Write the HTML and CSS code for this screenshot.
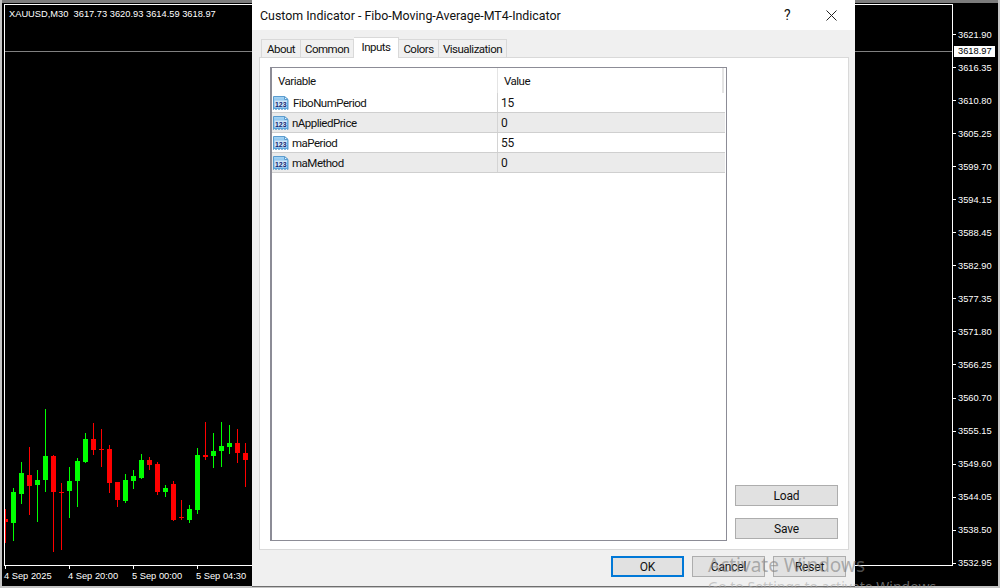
FILE: index.html
```html
<!DOCTYPE html>
<html lang="en">
<head>
<meta charset="utf-8">
<title>Custom Indicator</title>
<link rel="stylesheet" href="styles.css">
</head>
<body>
<svg class="defs" width="0" height="0" aria-hidden="true">
  <defs>
    <linearGradient id="sheet" x1="0" y1="0" x2="0" y2="1">
      <stop offset="0" stop-color="#a9d6f5"/>
      <stop offset="1" stop-color="#4f9fe0"/>
    </linearGradient>
    <symbol id="num" viewBox="0 0 16 16">
      <path d="M.5 1.500h11l3.500 3v10l-1.500-1-1.500 1-1.500-1-1.500 1-1.500-1-1.500 1-1.500-1-1.500 1-1.500-1-1 1z" fill="url(#sheet)" stroke="#5b9ccf"/>
      <path d="M11.500 1.500v3h3.500z" fill="#e8f4fc" stroke="#5b9ccf"/>
      <rect x="1.500" y="5.500" width="12.500" height="7" fill="#cfe6f8"/>
      <text x="7.800" y="11.500" class="num-text">123</text>
    </symbol>
  </defs>
</svg>

<section class="chart">
  <div class="plot">
    <div class="symbol-line">XAUUSD,M30&nbsp; 3617.73 3620.93 3614.59 3618.97</div>
    <svg class="candles" viewBox="5 5 947 560" width="947" height="560" aria-hidden="true">
      <rect x="5" y="51" width="947" height="1" fill="#808080"/>
      <path fill="#ff0000" d="M5 509h1V543h-1zM3 519h5V522h-5zM29 447h1V515h-1zM27 475h5V486h-5zM53 455h1V552h-1zM51 456h5V492h-5zM61 483h1V550h-1zM59 492h5V493h-5zM93 423h1V455h-1zM91 439h5V450h-5zM101 429h1V467h-1zM99 449h5V450h-5zM109 445h1V493h-1zM107 449h5V483h-5zM117 482h1V507h-1zM115 482h5V500h-5zM149 457h1V470h-1zM147 460h5V465h-5zM157 462h1V495h-1zM155 464h5V492h-5zM173 481h1V521h-1zM171 484h5V520h-5zM181 500h1V520h-1zM179 517h5V518h-5zM205 422h1V460h-1zM203 455h5V457h-5zM237 429h1V463h-1zM235 443h5V453h-5zM245 443h1V487h-1zM243 453h5V460h-5z"/>
      <path fill="#00ff00" d="M13 488h1V541h-1zM11 492h5V523h-5zM21 462h1V504h-1zM19 473h5V494h-5zM37 470h1V522h-1zM35 480h5V485h-5zM45 409h1V492h-1zM43 456h5V480h-5zM69 467h1V518h-1zM67 481h5V491h-5zM77 458h1V507h-1zM75 461h5V481h-5zM85 433h1V463h-1zM83 439h5V462h-5zM125 474h1V503h-1zM123 480h5V501h-5zM133 470h1V489h-1zM131 476h5V481h-5zM141 454h1V479h-1zM139 460h5V478h-5zM165 485h1V497h-1zM163 488h5V492h-5zM189 505h1V523h-1zM187 509h5V520h-5zM197 448h1V514h-1zM195 455h5V510h-5zM213 433h1V468h-1zM211 451h5V456h-5zM221 422h1V467h-1zM219 446h5V451h-5zM229 425h1V454h-1zM227 443h5V447h-5z"/>
    </svg>
  </div>
  <div class="price-axis">
    <span class="current-price">3618.97</span>
    <div class="price">3621.90</div>
    <div class="price">3616.35</div>
    <div class="price">3610.80</div>
    <div class="price">3605.25</div>
    <div class="price">3599.70</div>
    <div class="price">3594.15</div>
    <div class="price">3588.45</div>
    <div class="price">3582.90</div>
    <div class="price">3577.35</div>
    <div class="price">3571.80</div>
    <div class="price">3566.25</div>
    <div class="price">3560.70</div>
    <div class="price">3555.15</div>
    <div class="price">3549.60</div>
    <div class="price">3544.05</div>
    <div class="price">3538.50</div>
    <div class="price">3532.95</div>
  </div>
  <div class="time-axis">
    <div class="time">4 Sep 2025</div>
    <div class="time">4 Sep 20:00</div>
    <div class="time">5 Sep 00:00</div>
    <div class="time">5 Sep 04:30</div>
  </div>
</section>

<section class="dialog">
  <header class="titlebar">
    <div class="title">Custom Indicator - Fibo-Moving-Average-MT4-Indicator</div>
    <div class="help">?</div>
    <svg class="close" width="11" height="11" viewBox="0 0 11 11" aria-hidden="true">
      <path d="M.5.500l10 10M10.500.500l-10 10" stroke="#222" stroke-width="1" fill="none"/>
    </svg>
  </header>
  <div class="dialog-body">
    <nav class="tabs">
      <div class="tab tab-about">About</div>
      <div class="tab tab-common">Common</div>
      <div class="tab tab-inputs active">Inputs</div>
      <div class="tab tab-colors">Colors</div>
      <div class="tab tab-vis">Visualization</div>
    </nav>
    <div class="panel">
      <div class="list">
        <div class="list-head">
          <div class="col-var">Variable</div>
          <div class="col-val">Value</div>
          <div class="head-end"></div>
        </div>
        <div class="row">
          <div class="cell-var first"><svg class="icon"><use href="#num"/></svg><span>FiboNumPeriod</span></div>
          <div class="cell-val">15</div>
        </div>
        <div class="row alt">
          <div class="cell-var"><svg class="icon"><use href="#num"/></svg><span>nAppliedPrice</span></div>
          <div class="cell-val">0</div>
        </div>
        <div class="row">
          <div class="cell-var"><svg class="icon"><use href="#num"/></svg><span>maPeriod</span></div>
          <div class="cell-val">55</div>
        </div>
        <div class="row alt">
          <div class="cell-var"><svg class="icon"><use href="#num"/></svg><span>maMethod</span></div>
          <div class="cell-val">0</div>
        </div>
      </div>
      <div class="side">
        <button class="btn side-btn">Load</button>
        <button class="btn side-btn">Save</button>
      </div>
    </div>
    <footer class="footer">
      <button class="btn foot-btn default">OK</button>
      <button class="btn foot-btn">Cancel</button>
      <button class="btn foot-btn">Reset</button>
    </footer>
  </div>
</section>

<div class="watermark">
  <div class="wm-title">Activate Windows</div>
  <div class="wm-sub">Go to Settings to activate Windows.</div>
</div>
</body>
</html>
```

FILE: styles.css
```css
* { box-sizing: border-box; }

html, body {
  margin: 0;
  height: 588px;
  overflow: hidden;
}

body {
  position: relative;
  width: 1000px;
  background: #c4c4c4;
  font-family: Roboto, "Liberation Sans", sans-serif;
}

.defs { position: absolute; }

.num-text {
  font-family: "Liberation Sans", sans-serif;
  font-size: 7px;
  font-weight: 700;
  letter-spacing: 0;
  text-anchor: middle;
  fill: #12246e;
}

/* chart window */
.chart {
  position: absolute;
  left: 2px;
  top: 0;
  width: 996px;
  height: 586px;
  padding-left: 2px;
  background: #000;
  border-top: 3px solid #7c7c7c;
  display: grid;
  grid-template-columns: 949px 45px;
  grid-template-rows: 563px 20px;
  color: #fff;
  font-family: "Liberation Sans", sans-serif;
  font-size: 10px;
}

.plot {
  position: relative;
  grid-column: 1;
  grid-row: 1;
  margin-top: 1px;
  border: 1px solid #fff;
  overflow: hidden;
}

.candles { display: block; }

.symbol-line {
  position: absolute;
  left: 4px;
  top: 2px;
  white-space: pre;
  font-size: 9.300px;
  line-height: 14px;
}

.price-axis {
  position: relative;
  grid-column: 2;
  grid-row: 1 / 3;
  padding-top: 15px;
}

.price {
  height: 33.050px;
  display: flex;
  align-items: center;
  font-size: 9.300px;
}

.price::before {
  content: "";
  width: 3px;
  height: 1px;
  margin-right: 2px;
  background: #fff;
}

.current-price {
  position: absolute;
  left: 1px;
  top: 43px;
  width: 41px;
  height: 11px;
  padding-left: 4px;
  background: #fff;
  color: #000;
  font-size: 9.300px;
  line-height: 11px;
}

.time-axis {
  grid-column: 1;
  grid-row: 2;
  display: flex;
}

.time {
  width: 64px;
  white-space: nowrap;
  font-size: 9.300px;
  line-height: 12px;
}

.time::before {
  content: "";
  display: block;
  width: 1px;
  height: 3px;
  margin-left: 1px;
  margin-bottom: 1px;
  background: #fff;
}

/* dialog window */
.dialog {
  position: absolute;
  left: 252px;
  top: 0;
  width: 603px;
  height: 587px;
  background: #f0f0f0;
  border-bottom: 1px solid #6e6e6e;
  color: #111;
  font-size: 11.500px;
  letter-spacing: -0.5px;
}

.titlebar {
  height: 30px;
  display: flex;
  align-items: center;
  padding-left: 8px;
  background: #fff;
}

.title {
  flex: 1;
  font-size: 12.400px;
  letter-spacing: 0;
  white-space: nowrap;
}

.help {
  margin-right: 36px;
  font-size: 14px;
}

.close { margin-right: 18px; }

.dialog-body { padding: 7px 6px 0 7px; }

.tabs {
  display: flex;
  align-items: flex-end;
  height: 20px;
  padding-left: 2px;
  position: relative;
  z-index: 1;
}

.tab {
  height: 18px;
  border: 1px solid #d9d9d9;
  border-bottom: 0;
  border-left-width: 0;
  background: #f0f0f0;
  text-align: center;
  line-height: 18px;
  white-space: nowrap;
}

.tab-about { width: 40px; border-left-width: 1px; }
.tab-common { width: 53px; }
.tab-inputs { width: 45px; }
.tab-colors { width: 40px; }
.tab-vis { width: 68px; }

.tab.active {
  height: 21px;
  margin-bottom: -1px;
  background: #fff;
  line-height: 18px;
}

.panel {
  height: 493px;
  display: flex;
  gap: 8px;
  padding: 9px 10px 8px 10px;
  background: #fff;
  border: 1px solid #d9d9d9;
}

.list {
  width: 457px;
  height: 474px;
  padding-right: 1px;
  border: 1px solid #8c8c96;
  border-left-width: 2px;
}

.list-head {
  height: 25px;
  display: flex;
  line-height: 27px;
}

.col-var {
  width: 226px;
  padding-left: 6px;
  border-right: 1px solid #e4e4e4;
}

.col-val {
  flex: 1;
  padding-left: 6px;
}

.head-end {
  width: 2px;
  background: #e4e4e4;
  margin-right: 1px;
}

.row {
  height: 20px;
  display: flex;
  border-bottom: 1px solid #cfcfcf;
}

.row.alt { background: #ebebeb; }

.cell-var {
  width: 226px;
  display: flex;
  align-items: center;
  gap: 3px;
  padding-left: 1px;
  border-right: 1px solid #d4d4d4;
}

.cell-var.first { gap: 4px; }

.icon {
  width: 16px;
  height: 16px;
  flex: none;
}

.cell-val {
  flex: 1;
  padding-left: 3px;
  font-size: 12px;
  letter-spacing: -0.2px;
  line-height: 20px;
}

.side {
  flex: 1;
  display: flex;
  flex-direction: column;
  justify-content: flex-end;
  gap: 12px;
  padding-bottom: 2px;
}

.btn {
  margin: 0;
  padding: 0;
  background: #e1e1e1;
  border: 1px solid #adadad;
  color: #111;
  font-family: inherit;
  font-size: 12px;
  letter-spacing: -0.2px;
}

.side-btn {
  width: 103px;
  height: 21px;
}

.footer {
  display: flex;
  justify-content: flex-end;
  gap: 8px;
  margin-top: 6px;
  padding-right: 3px;
}

.foot-btn {
  width: 73px;
  height: 21px;
}

.foot-btn.default { border: 2px solid #0078d7; }

/* system watermark over everything */
.watermark {
  position: absolute;
  left: 708px;
  top: 552px;
  white-space: nowrap;
  pointer-events: none;
  font-family: "Noto Sans", sans-serif;
}

.wm-title {
  font-size: 19px;
  line-height: 27px;
  color: rgba(130, 130, 130, 0.6);
}

.wm-sub {
  font-size: 14px;
  line-height: 16px;
  color: rgba(170, 170, 170, 0.6);
}
```
